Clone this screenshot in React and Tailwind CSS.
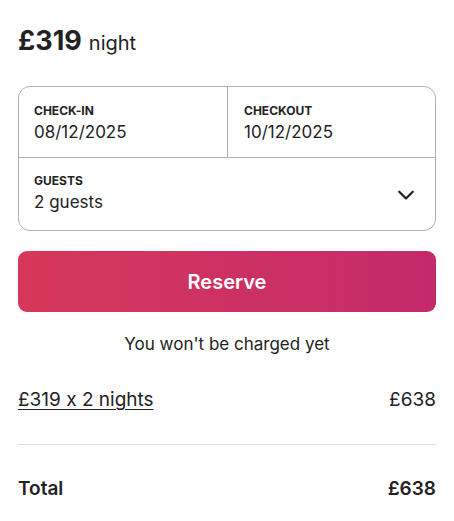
import React from "react";

const App = () => {
  return (
    <div className="bg-white w-[454px] h-[521px] px-[18px] text-[#222222] [font-feature-settings:'calt'_0]" style={{ fontFamily: "Inter, 'Noto Sans', sans-serif" }}>
      {/* price */}
      <div className="flex items-baseline gap-[7px] pt-[21px] h-[86px]">
        <span className="text-[27px] font-bold">£319</span>
        <span className="text-[20px]">night</span>
      </div>

      {/* dates + guests box */}
      <div className="border border-[#b0b0b0] rounded-[12px] overflow-hidden">
        <div className="flex h-[71px] border-b border-[#b0b0b0]">
          <div className="w-[209px] border-r border-[#b0b0b0] pl-[15px] pt-[15px]">
            <div className="text-[12px] font-bold uppercase">Check-in</div>
            <div className="text-[17px]">08/12/2025</div>
          </div>
          <div className="flex-1 pl-[16px] pt-[15px]">
            <div className="text-[12px] font-bold uppercase">Checkout</div>
            <div className="text-[17px]">10/12/2025</div>
          </div>
        </div>
        <div className="flex items-center h-[72px] pl-[15px] pr-[20px]">
          <div className="flex-1">
            <div className="text-[12px] font-bold uppercase">Guests</div>
            <div className="text-[17px]">2 guests</div>
          </div>
          <svg width="18" height="18" viewBox="0 0 32 32" fill="none" stroke="#222222" strokeWidth="4" strokeLinecap="round" strokeLinejoin="round">
            <path d="M28 12 16 24 4 12" />
          </svg>
        </div>
      </div>

      {/* reserve */}
      <button className="mt-[20px] w-full h-[61px] rounded-[9px] bg-gradient-to-r from-[#d6385a] to-[#c42a6a] text-white text-[20px] font-semibold">
        Reserve
      </button>
      <p className="text-center text-[17px] mt-[20px]">You won't be charged yet</p>

      {/* breakdown */}
      <div className="flex justify-between items-center text-[19px] mt-[28px]">
        <span className="underline underline-offset-[3px] decoration-1">£319 x 2 nights</span>
        <span>£638</span>
      </div>
      <div className="border-t border-[#dddddd] mt-[30px]" />
      <div className="flex justify-between items-center text-[19px] font-semibold mt-[30px]">
        <span>Total</span>
        <span>£638</span>
      </div>
    </div>
  );
};

export default App;
